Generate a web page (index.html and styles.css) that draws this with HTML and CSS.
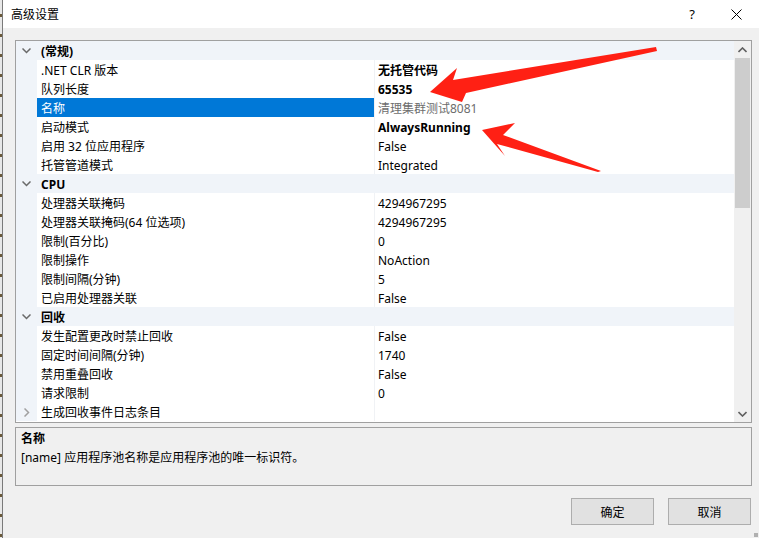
FILE: index.html
```html
<!DOCTYPE html>
<html lang="zh-CN">
<head>
<meta charset="utf-8">
<title>高级设置</title>
<link rel="stylesheet" href="styles.css">
</head>
<body>
<div class="screen">
  <div class="edge"><div class="edge-strip"></div><div class="edge-line"></div></div>
  <div class="window">
    <div class="titlebar">
      <div class="title">高级设置</div>
      <div class="tb-help">?</div>
      <div class="tb-close">
        <svg width="11" height="11" viewBox="0 0 11 11"><path d="M0.5 0.5L10.5 10.5M10.5 0.5L0.5 10.5" stroke="#000" stroke-width="1" fill="none"/></svg>
      </div>
    </div>
    <div class="content">
      <div class="grid-box">
        <div class="rows">
          <div class="row cat"><span class="gut"><svg class="chev" width="9" height="6" viewBox="0 0 9 6"><path d="M0.5 0.5L4.5 4.5L8.5 0.5" stroke="#6a6a6a" stroke-width="1.5" fill="none"/></svg></span><span class="cat-name">(常规)</span></div>
          <div class="row"><span class="gut"></span><span class="nm">.NET CLR 版本</span><span class="val b">无托管代码</span></div>
          <div class="row"><span class="gut"></span><span class="nm">队列长度</span><span class="val b">65535</span></div>
          <div class="row sel"><span class="gut"></span><span class="nm">名称</span><span class="val grey">清理集群测试8081</span></div>
          <div class="row"><span class="gut"></span><span class="nm">启动模式</span><span class="val b">AlwaysRunning</span></div>
          <div class="row"><span class="gut"></span><span class="nm">启用 32 位应用程序</span><span class="val">False</span></div>
          <div class="row"><span class="gut"></span><span class="nm">托管管道模式</span><span class="val">Integrated</span></div>
          <div class="row cat"><span class="gut"><svg class="chev" width="9" height="6" viewBox="0 0 9 6"><path d="M0.5 0.5L4.5 4.5L8.5 0.5" stroke="#6a6a6a" stroke-width="1.5" fill="none"/></svg></span><span class="cat-name">CPU</span></div>
          <div class="row"><span class="gut"></span><span class="nm">处理器关联掩码</span><span class="val">4294967295</span></div>
          <div class="row"><span class="gut"></span><span class="nm">处理器关联掩码(64 位选项)</span><span class="val">4294967295</span></div>
          <div class="row"><span class="gut"></span><span class="nm">限制(百分比)</span><span class="val">0</span></div>
          <div class="row"><span class="gut"></span><span class="nm">限制操作</span><span class="val">NoAction</span></div>
          <div class="row"><span class="gut"></span><span class="nm">限制间隔(分钟)</span><span class="val">5</span></div>
          <div class="row"><span class="gut"></span><span class="nm">已启用处理器关联</span><span class="val">False</span></div>
          <div class="row cat"><span class="gut"><svg class="chev" width="9" height="6" viewBox="0 0 9 6"><path d="M0.5 0.5L4.5 4.5L8.5 0.5" stroke="#6a6a6a" stroke-width="1.5" fill="none"/></svg></span><span class="cat-name">回收</span></div>
          <div class="row"><span class="gut"></span><span class="nm">发生配置更改时禁止回收</span><span class="val">False</span></div>
          <div class="row"><span class="gut"></span><span class="nm">固定时间间隔(分钟)</span><span class="val">1740</span></div>
          <div class="row"><span class="gut"></span><span class="nm">禁用重叠回收</span><span class="val">False</span></div>
          <div class="row"><span class="gut"></span><span class="nm">请求限制</span><span class="val">0</span></div>
          <div class="row"><span class="gut"><svg class="chev" width="6" height="9" viewBox="0 0 6 9"><path d="M0.5 0.5L4.5 4.5L0.5 8.5" stroke="#a0a0a0" stroke-width="1.5" fill="none"/></svg></span><span class="nm">生成回收事件日志条目</span><span class="val"></span></div>
        </div>
        <div class="scrollbar">
          <div class="sb-btn"><svg width="9" height="6" viewBox="0 0 9 6"><path d="M0.5 5L4.5 1L8.5 5" stroke="#606060" stroke-width="1.6" fill="none"/></svg></div>
          <div class="sb-track"><div class="sb-thumb"></div></div>
          <div class="sb-btn"><svg width="9" height="6" viewBox="0 0 9 6"><path d="M0.5 1L4.5 5L8.5 1" stroke="#606060" stroke-width="1.6" fill="none"/></svg></div>
        </div>
      </div>
      <div class="desc">
        <div class="desc-title">名称</div>
        <div class="desc-text">[name] 应用程序池名称是应用程序池的唯一标识符。</div>
      </div>
      <div class="buttons">
        <div class="btn">确定</div>
        <div class="btn">取消</div>
      </div>
      <div class="grip"></div>
    </div>
  </div>
  <svg class="arrows" width="759" height="538" viewBox="0 0 759 538">
    <polygon fill="#ff2014" points="656,47 453,80 457,68 430,92 462,102 466,93 657,51"/>
    <polygon fill="#ff2014" points="601,171 503,135 515,123 482,130 505,156 497,144 598,172"/>
  </svg>
</div>
</body>
</html>
```

FILE: styles.css
```css
* { box-sizing: border-box; }
html, body { margin: 0; padding: 0; }
body {
  width: 759px;
  height: 538px;
  overflow: hidden;
  font-family: "Segoe UI", "Noto Sans", "Noto Sans CJK SC", sans-serif;
  font-size: 12px;
  color: #000;
  background: #f0f0f0;
}
.screen {
  position: relative;
  display: flex;
  width: 759px;
  height: 538px;
}
.edge {
  display: flex;
  width: 3px;
  flex: none;
}
.edge-strip {
  width: 2px;
  background: repeating-linear-gradient(to bottom, #e8e8e8 0 14px, #6b5a3a 14px 17px, #e8e8e8 17px 20px);
}
.edge-line { width: 1px; background: #7a7a7a; }
.window {
  flex: 1;
  display: flex;
  flex-direction: column;
}
.titlebar {
  height: 28px;
  background: #fff;
  display: flex;
  align-items: center;
  padding-left: 8px;
}
.title { flex: 1; font-size: 12px; }
.tb-help { width: 46px; text-align: center; font-size: 13px; padding-left: 4px; }
.tb-close { width: 46px; display: flex; justify-content: center; align-items: center; }
.content {
  flex: 1;
  position: relative;
  padding: 12px 7px 0 12px;
  display: flex;
  flex-direction: column;
}
.grid-box {
  height: 383px;
  border: 1px solid #a0a0a0;
  background: #fff;
  display: flex;
}
.rows { flex: 1; display: flex; flex-direction: column; }
.row {
  height: 19px;
  display: grid;
  grid-template-columns: 21px 337px 1fr;
  align-items: stretch;
  line-height: 18px;
  overflow: hidden;
}
.gut {
  background: #f0f4f9;
  display: flex;
  align-items: center;
  justify-content: center;
}
.nm, .val, .cat-name {
  padding-top: 2px;
  white-space: nowrap;
}
.nm {
  padding-left: 4px;
  border-bottom: 1px solid #f0f2f5;
}
.val {
  padding-left: 3px;
  border-left: 1px solid #f0f2f5;
  border-bottom: 1px solid #f0f2f5;
}
.val.b { font-weight: bold; }
.val.grey { color: #6d6d6d; }
.row.sel .nm { background: #0078d7; color: #fff; border-bottom-color: #0078d7; }
.row.cat { background: #f0f4f9; }
.cat-name {
  grid-column: 2 / 4;
  padding-left: 4px;
  font-weight: bold;
}
.scrollbar {
  width: 17px;
  flex: none;
  background: #f0f0f0;
  display: flex;
  flex-direction: column;
}
.sb-btn {
  height: 17px;
  display: flex;
  align-items: center;
  justify-content: center;
}
.sb-track { flex: 1; padding: 0 1px; }
.sb-thumb { height: 150px; background: #cdcdcd; }
.desc {
  margin-top: 4px;
  height: 59px;
  border: 1px solid #a0a0a0;
  padding: 1px 0 0 5px;
  line-height: 19px;
}
.desc-title { font-weight: bold; }
.buttons {
  display: flex;
  justify-content: flex-end;
  gap: 14px;
  margin-top: 12px;
  padding-right: 1px;
}
.btn {
  width: 83px;
  height: 27px;
  background: #e1e1e1;
  border: 1px solid #adadad;
  display: flex;
  align-items: center;
  justify-content: center;
}
.grip {
  position: absolute;
  right: 1px;
  bottom: 1px;
  width: 4px;
  height: 4px;
  background:
    radial-gradient(circle, #b0b0b0 0.8px, transparent 1px) 0 0 / 2px 2px;
}
.arrows {
  position: absolute;
  left: 0;
  top: 0;
  pointer-events: none;
}
```
